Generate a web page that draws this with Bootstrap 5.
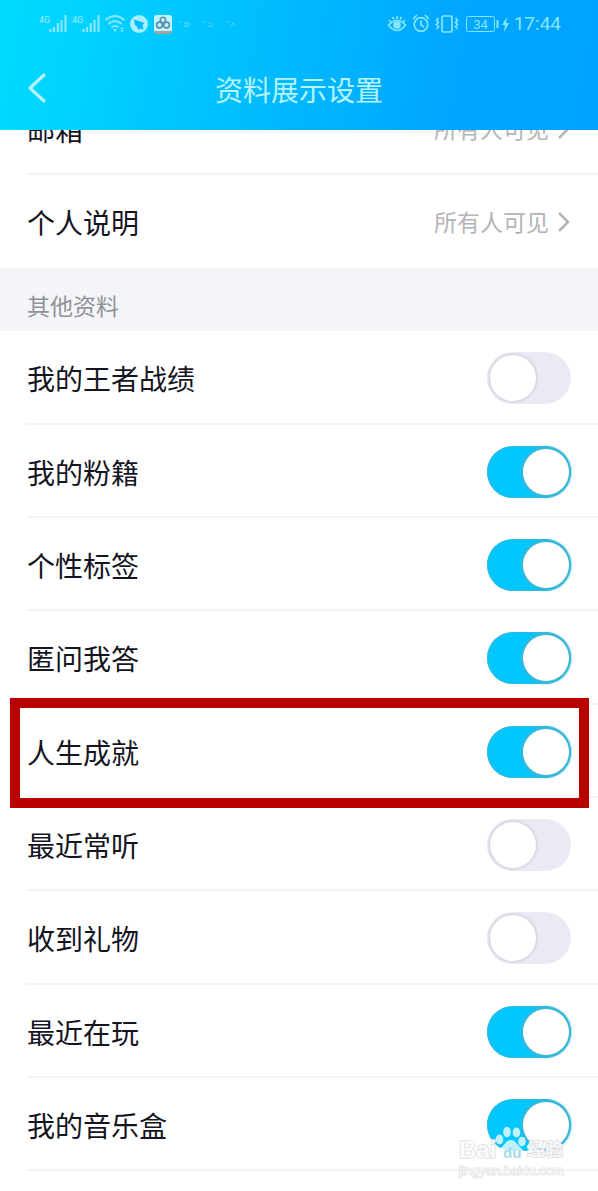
<!DOCTYPE html>
<html lang="zh-CN">
<head>
<meta charset="utf-8">
<meta name="viewport" content="width=device-width, initial-scale=1">
<title>资料展示设置</title>
<link href="https://cdn.jsdelivr.net/npm/bootstrap@5.3.0/dist/css/bootstrap.min.css" rel="stylesheet">
<style>
  body { font-family: "Noto Sans CJK SC", Roboto, sans-serif; color: #15151f; background: #fff; line-height: 1.5; }
  .app { min-height: 100vh; overflow: clip; padding-bottom: 19px; }
  .topbar { background: linear-gradient(100deg, #00dcff 0%, #00c6ff 30%, #00a6ff 75%, #00a2ff 100%); color: #b4f4ff; }
  .statusbar { height: 48px; padding: 0 37px 0 38px; color: #86e6ff; }
  .clock { font: 19px/24px Roboto, sans-serif; margin-left: 2px; }
  .titlebar { height: 82px; }
  .titlebar h1 { font-size: 28px; line-height: 40px; font-weight: 400; }
  .back { left: 16px; top: 18px; width: 40px; height: 44px; color: #b4f4ff; }
  .scrolled { margin-top: -48px; }
  .item { height: 93px; padding-right: 27px; padding-top: 2px; margin-left: 27px; border-bottom: 2px solid #f4f4f6; font-size: 28px; color: inherit; }
  .item-last { border-bottom-color: transparent; }
  .toggles .item:nth-child(3n+1) { height: 94px; }
  .access { font-size: 23px; color: #b4b4b8; gap: 8px; }
  .section-name { height: 63px; padding: 12px 27px 0; background: #f4f5f9; color: #919197; font-size: 23px; line-height: 50px; font-weight: 400; }
  .toggle.form-check-input { width: 84px; height: 52px; margin: 0; border: 0; border-radius: 26px; background: #eaeaf5; position: relative; }
  .toggle.form-check-input::before { content: ""; display: block; width: 46px; height: 46px; margin: 3px; border-radius: 50%; background: #fff; box-shadow: 0 0 3px 1px rgba(90, 90, 110, .2); }
  .toggle.form-check-input:checked { background: #00c8ff; box-shadow: inset 0 0 2px 1px #38b6d8; }
  .toggle.form-check-input:checked::before { margin-left: 36px; box-shadow: 0 0 3px 2px #48b4d0; }
  .marked { position: relative; }
  .marked::after { content: ""; position: absolute; inset: -7px 9px -12px -17px; border: 10px solid #b80000; pointer-events: none; }
  .watermark { position: absolute; right: 30px; bottom: 12px; width: 110px; height: 56px; pointer-events: none; }
</style>
</head>
<body>
<div class="app position-relative">
  <header class="topbar sticky-top">
    <div class="statusbar d-flex align-items-center justify-content-between">
      <svg width="200" height="26" viewBox="38 11 200 26" fill="none" stroke="currentColor" aria-hidden="true">
        <g fill="currentColor" stroke="none" font-family="Roboto, sans-serif" font-size="9" font-weight="500">
          <text x="39" y="23">4G</text><text x="72" y="23">4G</text>
        </g>
        <path stroke-width="2.2" d="M50.500 32v-3M54 32v-5M57.800 32v-9M61.500 32v-12M65.500 32v-17M83.500 32v-3M87 32v-5M90.800 32v-9M94.500 32v-12M98.500 32v-17"/>
        <path stroke-width="2" d="M105.500 20q9.500-8 19 0M108.500 24q6.500-6 13 0M111.500 27.500q3.500-3 7 0"/>
        <path fill="currentColor" stroke="none" d="M113 29h4l-2 3zM120 29l2-2 2 2zM120 30h4l-2 2z"/>
        <circle cx="139" cy="24" r="9" fill="#a5efff" stroke="none"/>
        <path d="M134 19.500l10.500 3.500-2 2 1 4.500-3.500-1-1.500 1.500-1.500-3.500-2-1.500z" fill="#00b9ff" stroke="none"/>
        <rect x="154" y="15" width="18" height="18" rx="3" fill="#c4f5ff" stroke="none"/>
        <g stroke="#568fae" stroke-width="1.600"><circle cx="163" cy="20" r="2.700"/><circle cx="159.500" cy="25" r="2.900"/><circle cx="166.500" cy="25" r="2.900"/></g>
        <path d="M154 31h18l-2 3h-14z" fill="#a4a39f" stroke="none"/>
        <g opacity=".55"><path d="M179 22h3M184 23l5 0M184 26h5M203 22h3M226 22h3M231 26l2-3 3 3"/><circle cx="187" cy="24.500" r="2"/><path d="M208 23q5 0 4 3h-4"/></g>
      </svg>
      <div class="d-flex align-items-center">
        <svg width="126" height="26" viewBox="385 11 126 26" fill="none" stroke="currentColor" stroke-width="1.700" aria-hidden="true">
          <path d="M387.500 25q8.500-9 17 0q-8.500 11-17 0zM388 20l2 2M391.500 17l1.500 2.500M396 16v3M400.500 17l-1.500 2.500M404 20l-2 2"/>
          <circle cx="396" cy="25" r="3" fill="currentColor"/>
          <circle cx="420" cy="24.500" r="6.800"/><path d="M420 20.500v4.500l3 2M412 19l4-4M428 19l-4-4"/>
          <rect x="441" y="16" width="10" height="16" rx="1.500"/><path d="M437.500 18l-2 2.500 2 2-2 2 2 2-2 2.500M454.500 18l2 2.500-2 2 2 2-2 2 2 2.500"/>
          <rect x="465.500" y="16.500" width="28" height="15" rx="2" stroke-width="1"/><path d="M496.500 20v8" stroke-width="2"/>
          <text x="479.500" y="28.500" font-family="Roboto, sans-serif" font-size="13" text-anchor="middle" fill="currentColor" stroke="none">34</text>
          <path d="M506 17l-5 8h3l-1 7 5-9h-3z" fill="currentColor" stroke="none"/>
        </svg>
        <span class="clock">17:44</span>
      </div>
    </div>
    <div class="titlebar position-relative d-flex align-items-center justify-content-center">
      <button type="button" class="back btn p-0 border-0 position-absolute" aria-label="返回">
        <svg class="d-block" width="40" height="44" fill="none" stroke="currentColor" stroke-width="3.200" stroke-linecap="round" stroke-linejoin="round"><path d="M28 9L14 22l14 13"/></svg>
      </button>
      <h1 class="m-0">资料展示设置</h1>
    </div>
  </header>

  <main class="scrolled">
    <a href="#" class="item d-flex align-items-center justify-content-between text-decoration-none">
      <span>邮箱</span>
      <span class="access d-flex align-items-center">所有人可见
        <svg width="14" height="20" fill="none" stroke="currentColor" stroke-width="2.500"><path d="M2 1l9 9-9 9"/></svg></span>
    </a>
    <a href="#" class="item item-last d-flex align-items-center justify-content-between text-decoration-none">
      <span>个人说明</span>
      <span class="access d-flex align-items-center">所有人可见
        <svg width="14" height="20" fill="none" stroke="currentColor" stroke-width="2.500"><path d="M2 1l9 9-9 9"/></svg></span>
    </a>
    <h2 class="section-name m-0">其他资料</h2>
    <div class="toggles">
      <div class="item d-flex align-items-center justify-content-between"><label for="t1">我的王者战绩</label><input class="toggle form-check-input" type="checkbox" role="switch" id="t1"></div>
      <div class="item d-flex align-items-center justify-content-between"><label for="t2">我的粉籍</label><input class="toggle form-check-input" type="checkbox" role="switch" id="t2" checked></div>
      <div class="item d-flex align-items-center justify-content-between"><label for="t3">个性标签</label><input class="toggle form-check-input" type="checkbox" role="switch" id="t3" checked></div>
      <div class="item d-flex align-items-center justify-content-between"><label for="t4">匿问我答</label><input class="toggle form-check-input" type="checkbox" role="switch" id="t4" checked></div>
      <div class="item marked d-flex align-items-center justify-content-between"><label for="t5">人生成就</label><input class="toggle form-check-input" type="checkbox" role="switch" id="t5" checked></div>
      <div class="item d-flex align-items-center justify-content-between"><label for="t6">最近常听</label><input class="toggle form-check-input" type="checkbox" role="switch" id="t6"></div>
      <div class="item d-flex align-items-center justify-content-between"><label for="t7">收到礼物</label><input class="toggle form-check-input" type="checkbox" role="switch" id="t7"></div>
      <div class="item d-flex align-items-center justify-content-between"><label for="t8">最近在玩</label><input class="toggle form-check-input" type="checkbox" role="switch" id="t8" checked></div>
      <div class="item d-flex align-items-center justify-content-between"><label for="t9">我的音乐盒</label><input class="toggle form-check-input" type="checkbox" role="switch" id="t9" checked></div>
    </div>
  </main>

  <svg class="watermark" viewBox="458 1123 110 56" aria-label="Baidu经验">
    <g fill="#fff" fill-opacity=".75">
      <ellipse cx="499.500" cy="1139.500" rx="3.800" ry="5"/><ellipse cx="507" cy="1132" rx="3.800" ry="5.200"/><ellipse cx="516.500" cy="1132.500" rx="3.800" ry="5"/><ellipse cx="522" cy="1141.500" rx="3.800" ry="4.800"/>
      <path d="M511 1140c5 0 7 6 11 9 6 5 3 12-3 12h-16c-6 0-9-7-3-12 4-3 6-9 11-9z"/>
    </g>
    <g fill="#fff" fill-opacity=".8" stroke="#dedee1" paint-order="stroke" stroke-width="1.500" stroke-linejoin="round">
      <text x="459" y="1158" font-family="Liberation Sans, sans-serif" font-size="24" font-weight="700">Bai</text>
      <text x="527" y="1156" font-family="Noto Sans CJK SC, sans-serif" font-size="18" font-weight="700">经验</text>
      <text x="459" y="1175" font-family="Liberation Sans, sans-serif" font-size="13" stroke-width="1.200">jingyan.baidu.com</text>
    </g>
    <text x="503" y="1158" font-family="Liberation Sans, sans-serif" font-size="15" font-weight="700" fill="#a5dcea">du</text>
  </svg>
</div>
<script src="https://cdn.jsdelivr.net/npm/bootstrap@5.3.0/dist/js/bootstrap.bundle.min.js"></script>
</body>
</html>
